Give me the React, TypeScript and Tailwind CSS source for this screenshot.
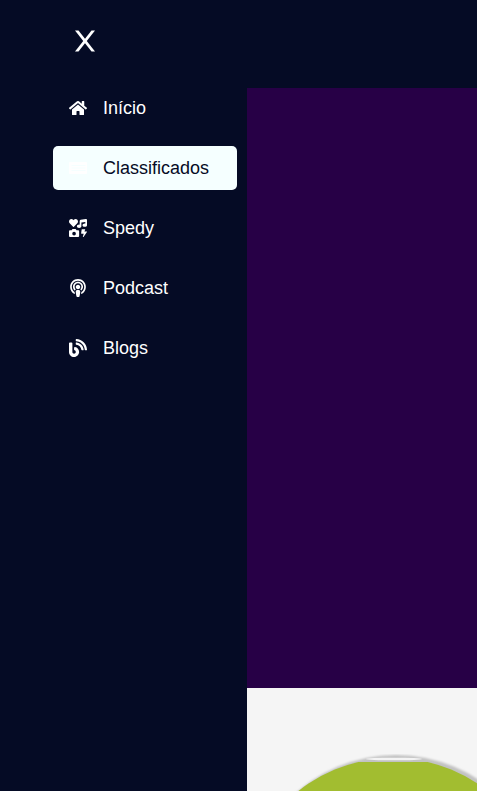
import { FaHome, FaIcons, FaPodcast, FaBlog } from "react-icons/fa";
import type { ComponentType } from "react";

type IconProps = { className?: string };
type Item = { label: string; icon: ComponentType<IconProps>; active?: boolean };

function ListIcon({ className }: IconProps) {
  return (
    <svg className={className} viewBox="0 0 18 18" fill="currentColor" aria-hidden="true">
      <path
        fillRule="evenodd"
        d="M1 3H17Q18 3 18 4V14Q18 15 17 15H1Q0 15 0 14V4Q0 3 1 3Z M2.500 6V7H16.500V6Z M2.500 8.500V9.500H16.500V8.500Z M2.500 11V12H16.500V11Z"
      />
    </svg>
  );
}

const items: Item[] = [
  { label: "Início", icon: FaHome },
  { label: "Classificados", icon: ListIcon, active: true },
  { label: "Spedy", icon: FaIcons },
  { label: "Podcast", icon: FaPodcast },
  { label: "Blogs", icon: FaBlog },
];

function CloseIcon() {
  return (
    <svg width="20" height="22" viewBox="0 0 20 22" fill="currentColor" aria-hidden="true">
      <path d="M0 .5H3.500L20 21.500H16.500Z" />
      <path d="M20 .5H16.500L0 21.500H3.500Z" />
    </svg>
  );
}

function Sidebar() {
  return (
    <aside className="w-[247px] shrink-0 bg-[#050b25] pt-[30px] pr-[10px] pl-[53px] text-white">
      <button type="button" aria-label="Fechar menu" className="ml-[22px] block">
        <CloseIcon />
      </button>
      <nav className="mt-[34px]">
        <ul className="flex flex-col gap-4">
          {items.map(({ label, icon: Icon, active }) => (
            <li key={label}>
              <a
                href="#"
                className={
                  active
                    ? "flex h-11 items-center gap-4 rounded-[5px] bg-[#f5ffff] px-4 text-lg text-[#050b25]"
                    : "flex h-11 items-center gap-4 rounded-[5px] px-4 text-lg"
                }
              >
                <Icon className="size-[18px] text-white" />
                {label}
              </a>
            </li>
          ))}
        </ul>
      </nav>
    </aside>
  );
}

function Badge() {
  return (
    <svg className="block shrink-0" width="300" height="300" viewBox="0 0 300 300" role="img" aria-label="Logo">
      <defs>
        <clipPath id="fill-area">
          <rect x="0" y="8" width="300" height="292" />
        </clipPath>
        <filter id="soft" x="-5%" y="-5%" width="110%" height="110%">
          <feGaussianBlur stdDeviation="1" />
        </filter>
        <filter id="soft-light" x="-10%" y="-200%" width="120%" height="500%">
          <feGaussianBlur stdDeviation="0.600" />
        </filter>
      </defs>
      <circle cx="149" cy="152" r="151" fill="#c2c2c2" filter="url(#soft)" />
      <ellipse cx="147" cy="5" rx="28" ry="1.300" fill="#f4f4f4" filter="url(#soft-light)" />
      <circle cx="146" cy="156" r="152" fill="#a2bd30" clipPath="url(#fill-area)" />
    </svg>
  );
}

export default function App() {
  return (
    <div className="flex h-screen overflow-hidden bg-[#f5f5f5] font-['Liberation_Sans',Arial,sans-serif]">
      <Sidebar />
      <main className="min-w-0 flex-1 overflow-hidden">
        <header className="h-[88px] bg-[#050b25]" />
        <section className="h-[600px] bg-[#270046]" />
        <section className="flex pt-[66px]">
          <Badge />
        </section>
      </main>
    </div>
  );
}
